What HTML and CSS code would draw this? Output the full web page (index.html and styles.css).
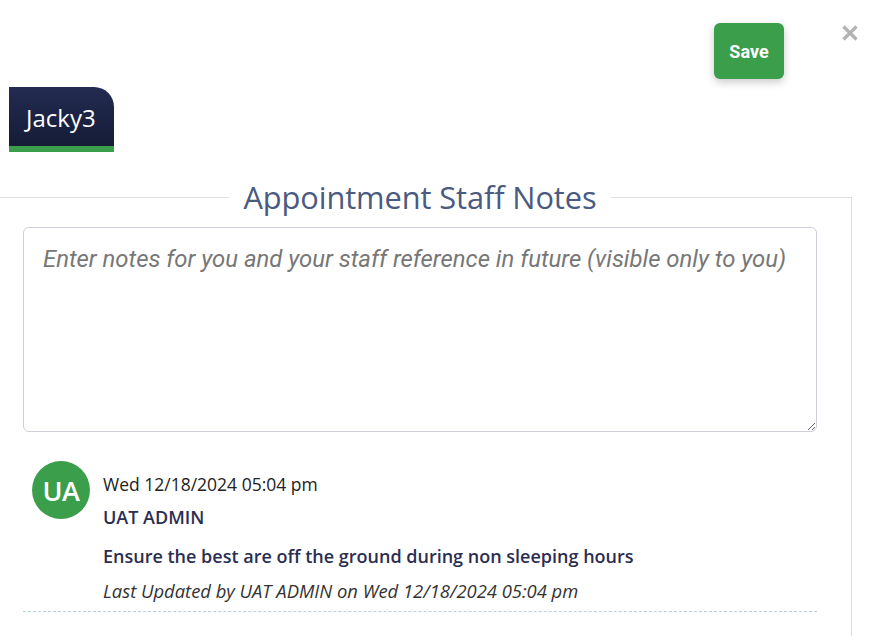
FILE: index.html
```html
<!DOCTYPE html>
<html>
<head>
<meta charset="utf-8">
<link rel="stylesheet" href="styles.css">
</head>
<body>
<div class="page">
  <div class="topbar">
    <button class="save">Save</button>
    <span class="close"><svg width="16" height="16" viewBox="0 0 16 16"><path d="M1.5 1.5 L14.5 14.5 M14.5 1.5 L1.5 14.5" stroke="#b3b3b3" stroke-width="3.2" stroke-linecap="butt"/></svg></span>
  </div>
  <div class="tab">
    <div class="tab-name">Jacky3</div>
  </div>
  <fieldset class="notes">
    <legend>Appointment Staff Notes</legend>
    <textarea class="entry" placeholder="Enter notes for you and your staff reference in future (visible only to you)"></textarea>
    <div class="note">
      <div class="avatar">UA</div>
      <div class="note-body">
        <div class="note-date">Wed 12/18/2024 05:04 pm</div>
        <div class="note-author">UAT ADMIN</div>
        <div class="note-text">Ensure the best are off the ground during non sleeping hours</div>
        <div class="note-meta">Last Updated by UAT ADMIN on Wed 12/18/2024 05:04 pm</div>
      </div>
    </div>
  </fieldset>
</div>
</body>
</html>
```
FILE: styles.css
```css
html, body {
  margin: 0;
  padding: 0;
  background: #fff;
  overflow: hidden;
}
.page {
  width: 873px;
  height: 641px;
  font-family: "Open Sans", sans-serif;
}
.topbar {
  display: flex;
  justify-content: flex-end;
  align-items: flex-start;
  padding-top: 23px;
  padding-right: 15px;
}
.save {
  width: 70px;
  height: 56px;
  border: none;
  border-radius: 6px;
  background: #3a9e4b;
  color: #fff;
  font-family: Roboto, sans-serif;
  font-weight: 700;
  font-size: 18px;
  box-shadow: 0 3px 8px rgba(0,0,0,0.22);
  padding: 0;
}
.close {
  display: block;
  margin-left: 58px;
  margin-top: 2px;
  width: 16px;
  height: 16px;
}
.close svg {
  display: block;
}
.tab {
  margin-left: 9px;
  margin-top: 8px;
  width: 105px;
  border-bottom: 6px solid #3a9e4b;
}
.tab-name {
  height: 59px;
  background: linear-gradient(#232b52, #151c36);
  border-top-right-radius: 20px;
  color: #fff;
  font-size: 24px;
  line-height: 62px;
  padding-left: 17px;
  box-sizing: border-box;
}
.notes {
  margin: 24px 0 0 -12px;
  width: 864px;
  box-sizing: border-box;
  border: 1px solid #ddd;
  border-bottom: none;
  padding: 9px 34px 0 34px;
  min-height: 460px;
}
.notes legend {
  margin: 0 auto;
  padding: 0 14px;
  color: #4a5a80;
  font-size: 30.8px;
  font-weight: 500;
  letter-spacing: -0.1px;
}
.entry {
  display: block;
  width: 794px;
  height: 205px;
  box-sizing: border-box;
  border: 1px solid #ccd0d6;
  border-radius: 6px;
  padding: 17px 19px;
  font-family: Roboto, sans-serif;
  font-size: 23.9px;
  resize: vertical;
  margin: 0;
}
.entry::placeholder {
  color: #777;
  font-style: italic;
}
.note {
  display: flex;
  margin-top: 29px;
  padding: 0 0 9px 9px;
  border-bottom: 1px dashed #b8d0da;
  width: 794px;
  box-sizing: border-box;
}
.avatar {
  width: 58px;
  height: 58px;
  border-radius: 50%;
  background: #3a9e4b;
  color: #fff;
  font-size: 27px;
  font-weight: 600;
  letter-spacing: -0.5px;
  display: flex;
  align-items: center;
  justify-content: center;
  flex-shrink: 0;
}
.note-body {
  margin-left: 13px;
  padding-top: 12px;
}
.note-date {
  font-size: 17.5px;
  color: #222;
  line-height: 22px;
}
.note-author {
  margin-top: 11px;
  font-size: 18px;
  font-weight: 600;
  color: #2b2e52;
  line-height: 22px;
}
.note-text {
  margin-top: 16px;
  font-size: 18px;
  font-weight: 600;
  color: #2b2e52;
  line-height: 24px;
}
.note-meta {
  margin-top: 12px;
  font-size: 18.4px;
  font-style: italic;
  color: #333;
  line-height: 22px;
}
```
